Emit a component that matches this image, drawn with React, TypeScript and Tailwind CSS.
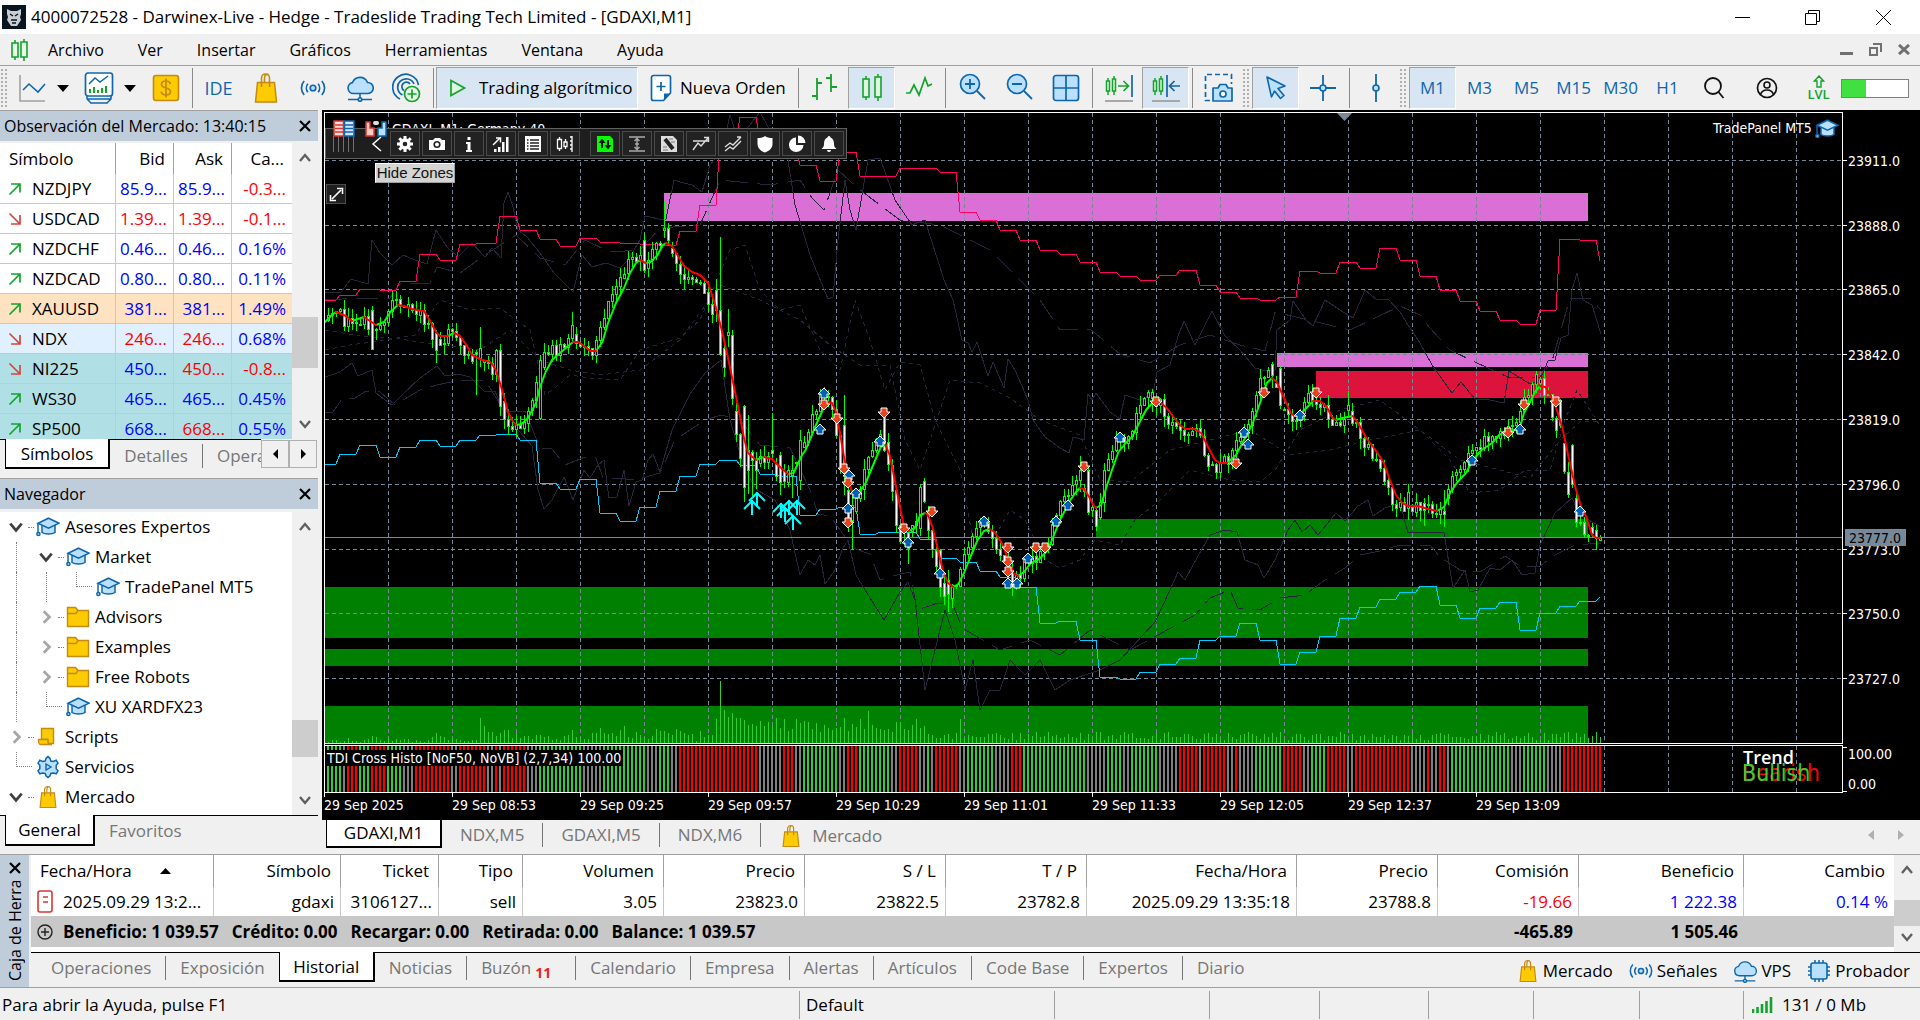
import type { ReactNode } from 'react'
import clsx from 'clsx'

/* ---------- icons ---------- */

const BLUE = '#0f66ad'
const SKY = '#b9e1ff'
const GREEN = '#12a42b'
const GOLD = '#fdcb00'
const BROWN = '#c48a12'

type IconProps = { children: ReactNode; w?: number; h?: number; className?: string }

function Icon({ children, w = 28, h = 32, className }: IconProps) {
  return (
    <svg width={w} height={h} viewBox={`0 0 ${w} ${h}`} fill="none" className={clsx('shrink-0', className)} aria-hidden="true">
      {children}
    </svg>
  )
}

function BagIcon({ small = false }: { small?: boolean }) {
  return (
    <svg width={small ? 18 : 24} height={small ? 24 : 32} viewBox="0 0 24 32" fill="none" className="shrink-0" aria-hidden="true">
      <path d="M3.500 10.500h17l2 19.500h-21z" fill={GOLD} stroke={BROWN} strokeWidth="1.500" />
      <path d="M7.500 15V6a4 4 0 0 1 8 0v9M10.500 10V6a4 4 0 0 1 4-4" stroke={BROWN} strokeWidth="1.600" />
    </svg>
  )
}

function SignalIcon({ w = 26 }: { w?: number }) {
  return (
    <svg width={w} height={w} viewBox="0 0 28 28" fill="none" stroke={BLUE} strokeWidth="1.800" className="shrink-0" aria-hidden="true">
      <circle cx="14" cy="14" r="3" fill={SKY} />
      <path d="M8.500 9.500a7 7 0 0 0 0 9M19.500 9.500a7 7 0 0 1 0 9M4.500 6.500a11 11 0 0 0 0 15M23.500 6.500a11 11 0 0 1 0 15" />
    </svg>
  )
}

function CloudIcon({ w = 28 }: { w?: number }) {
  return (
    <svg width={w} height={w} viewBox="0 0 28 28" fill="none" stroke={BLUE} strokeWidth="1.600" className="shrink-0" aria-hidden="true">
      <path d="M7.500 19.500a5.500 5.500 0 0 1-1-10.900A8 8 0 0 1 21.500 8.500a5.500 5.500 0 0 1 .5 11z" fill={SKY} />
      <path d="M14 19.500V24M2 25.500h24" />
      <circle cx="14" cy="25.500" r="1.800" fill={SKY} />
    </svg>
  )
}

function HatIcon({ className }: { className?: string }) {
  return (
    <svg width="24" height="20" viewBox="0 0 24 20" fill="none" stroke={BLUE} strokeWidth="1.500" className={clsx('shrink-0', className)} aria-hidden="true">
      <path d="M6 8v7.500c3 2 10 2 13 0V8" fill={SKY} />
      <path d="M12.500 1.200l10.500 5-10.500 5-10.500-5z" fill={SKY} />
      <path d="M2 6.500v9" />
      <circle cx="2.400" cy="17" r="1.600" fill={SKY} />
    </svg>
  )
}

function FolderIcon() {
  return (
    <Icon w={24} h={22}>
      <path d="M1.500 1.500h8l2.500 3h10.500v16h-21z" fill={GOLD} stroke={BROWN} strokeWidth="1.400" />
      <path d="M1.500 7.500h8.500l2-3" stroke={BROWN} strokeWidth="1.400" />
    </Icon>
  )
}

function ScriptIcon() {
  return (
    <Icon w={24} h={22}>
      <path d="M5.500 2.500h12v15h-5l-1.500-4h-5.500z" fill={GOLD} stroke={BROWN} strokeWidth="1.400" />
      <path d="M2.500 13.500h9.500v2.500c0 2 1.500 2.500 4 2.500H4.500c-2 0-2-2-2-5z" fill={GOLD} stroke={BROWN} strokeWidth="1.400" />
    </Icon>
  )
}

function GearPlayIcon() {
  return (
    <Icon w={24} h={24}>
      <path
        d="M12 1.500l2 2 .8 2.500 2.600.4 2.800-1.200 1.800 3-1.800 2v3.600l1.800 2-1.800 3-2.800-.8-2.600.4-.8 2.400-2 1.700-2-1.700-.8-2.400-2.600-.4-2.800.8-1.800-3 1.800-2v-3.600l-1.800-2 1.800-3 2.800 1.200 2.600-.4.800-2.500z"
        fill={SKY}
        stroke={BLUE}
        strokeWidth="1.500"
      />
      <path d="M10 9l5 3-5 3z" stroke={BLUE} strokeWidth="1.400" />
    </Icon>
  )
}

function ChipIcon() {
  return (
    <Icon w={24} h={24}>
      <path d="M8 1v22M12 1v22M16 1v22M1 8h22M1 12h22M1 16h22" stroke={BLUE} strokeWidth="1.500" />
      <rect x="4" y="4" width="16" height="16" rx="2" fill={SKY} stroke={BLUE} strokeWidth="1.600" />
    </Icon>
  )
}

function Chevron({ dir, color = '#606060', size = 14 }: { dir: 'up' | 'down' | 'right'; color?: string; size?: number }) {
  const d = { up: 'M2 10l5-6 5 6', down: 'M2 4l5 6 5-6', right: 'M5 2l5 5-5 5' }[dir]
  return (
    <svg width={size} height={size} viewBox="0 0 14 14" fill="none" className="shrink-0" aria-hidden="true">
      <path d={d} stroke={color} strokeWidth="2.400" />
    </svg>
  )
}

function CloseIcon() {
  return (
    <svg width="14" height="14" viewBox="0 0 14 14" fill="none" aria-hidden="true">
      <path d="M2 2l10 10M12 2L2 12" stroke="#000" strokeWidth="2.200" />
    </svg>
  )
}

function Candles() {
  return (
    <g stroke={GREEN} strokeWidth="1.600">
      <path d="M8 4v24M20 2v27" />
      <rect x="5" y="7" width="6" height="18" fill="#dff5df" />
      <rect x="17" y="5" width="6" height="20" fill="#dff5df" />
    </g>
  )
}

/* ---------- toolbar ---------- */

function Sep() {
  return (
    <span className="flex h-10 w-1.5 shrink-0 justify-center">
      <span className="w-px bg-[#8a8a8a]" />
    </span>
  )
}

function Grip() {
  return <span className="h-10 w-2 shrink-0 bg-[radial-gradient(#b0b0b0_1px,transparent_1px)] bg-[length:4px_4px]" />
}

function Tool({ label, active, children }: { label: string; active?: boolean; children: ReactNode }) {
  return (
    <button
      aria-label={label}
      className={clsx(
        'flex h-[42px] w-[47px] shrink-0 items-center justify-center text-[17px] text-[#0f66ad]',
        active && 'border border-[#a0a0a0] border-r-white border-b-white bg-[#d8e5f2]'
      )}
    >
      {children}
    </button>
  )
}

function Caret() {
  return (
    <svg width="12" height="7" viewBox="0 0 12 7" aria-hidden="true" className="shrink-0">
      <path d="M0 0h12l-6 7z" />
    </svg>
  )
}

function Toolbar() {
  return (
    <div className="flex h-11 items-center overflow-hidden bg-[#f0f0f0]">
      <Grip />
      <Tool label="Gráfico">
        <Icon>
          <path d="M2 3v26h25" stroke="#a0a0a0" strokeWidth="1.600" />
          <path d="M5 18l6-6 9 8 7-8" stroke={BLUE} strokeWidth="1.600" />
        </Icon>
      </Tool>
      <button aria-label="Lista de gráficos" className="flex w-4 shrink-0 justify-center">
        <Caret />
      </button>
      <span className="w-1 shrink-0" />
      <Tool label="Indicadores">
        <Icon w={30} h={34}>
          <rect x="1.500" y="2" width="27" height="23" rx="2.500" fill="#fff" stroke={BLUE} strokeWidth="1.700" />
          <path d="M5 13l6-6 5 4 8-6" stroke={BLUE} strokeWidth="1.500" />
          <path d="M6 22v-4M10 22v-6M14 22v-3M18 22v-5M22 22v-7" stroke={GREEN} strokeWidth="2" />
          <path d="M3 28h24M6 32h18M3 25v3M27 25v3l-4 4M3 28l4 4" stroke={BLUE} strokeWidth="1.500" />
        </Icon>
      </Tool>
      <button aria-label="Lista de indicadores" className="flex w-4 shrink-0 justify-center">
        <Caret />
      </button>
      <span className="w-1 shrink-0" />
      <Tool label="Depósitos">
        <Icon>
          <rect x="1.500" y="3.500" width="25" height="25" rx="2.500" fill={GOLD} stroke={BROWN} strokeWidth="1.600" />
          <path d="M18.500 12c-.5-2-2-3-4.500-3s-4.500 1-4.500 3.300c0 5 9 2.400 9 7.200 0 2.300-2 3.500-4.500 3.500s-4.500-1.200-4.800-3.300M14 6.500v19" stroke={BROWN} strokeWidth="1.700" />
        </Icon>
      </Tool>
      <Sep />
      <Tool label="IDE">
        <span className="text-[18px]">IDE</span>
      </Tool>
      <Tool label="Mercado">
        <BagIcon />
      </Tool>
      <Tool label="Señales">
        <SignalIcon />
      </Tool>
      <Tool label="VPS">
        <CloudIcon />
      </Tool>
      <Tool label="Copiar señal">
        <Icon w={30} h={32}>
          <g stroke={BLUE} strokeWidth="1.700">
            <path d="M8 27A13 13 0 1 1 26.500 13M10.500 23A8.500 8.500 0 1 1 22 12M12 18.500a4.500 4.500 0 1 1 6-6.500" />
          </g>
          <circle cx="20" cy="22" r="7.500" fill="#e6f8e6" stroke={GREEN} strokeWidth="1.700" />
          <path d="M20 17.500v9M15.500 22h9" stroke={GREEN} strokeWidth="1.700" />
        </Icon>
      </Tool>
      <Sep />
      <button className="flex h-[42px] w-[202px] shrink-0 items-center gap-3 border border-[#a0a0a0] border-r-white border-b-white bg-[#d8e5f2] pl-3 text-[17px] whitespace-nowrap">
        <Icon w={18} h={20}>
          <path d="M2 2.500l13.500 7.500L2 17.500z" fill="#dff5df" stroke={GREEN} strokeWidth="1.700" />
        </Icon>
        Trading algorítmico
      </button>
      <button className="flex h-[42px] w-[157px] shrink-0 items-center gap-2 pl-3 text-[17px] whitespace-nowrap">
        <Icon w={22} h={28}>
          <path d="M3.500 1.500h15a2 2 0 0 1 2 2V19l-7 7.500h-10a2 2 0 0 1-2-2v-21a2 2 0 0 1 2-2z" fill="#fff" stroke={BLUE} strokeWidth="1.700" />
          <path d="M20.500 19.500h-6.500v7z" fill={BLUE} />
          <path d="M11 8v9M6.500 12.500h9" stroke={BLUE} strokeWidth="1.700" />
        </Icon>
        Nueva Orden
      </button>
      <Sep />
      <Tool label="Barras">
        <Icon>
          <path d="M6 6v22M1 24h5M6 11h5M20 2v18M15 6h5M20 15h6" stroke={GREEN} strokeWidth="1.800" />
        </Icon>
      </Tool>
      <Tool label="Velas" active>
        <Icon>
          <Candles />
        </Icon>
      </Tool>
      <Tool label="Línea">
        <Icon>
          <path d="M1 21h4l4-8 5 10 6-17 3 8 4-2" stroke={GREEN} strokeWidth="1.700" />
        </Icon>
      </Tool>
      <Sep />
      <Tool label="Ampliar">
        <Icon>
          <circle cx="12" cy="12" r="9.500" fill={SKY} stroke={BLUE} strokeWidth="1.700" />
          <path d="M19 19l8 8M12 7v10M7 12h10" stroke={BLUE} strokeWidth="1.800" />
        </Icon>
      </Tool>
      <Tool label="Reducir">
        <Icon>
          <circle cx="12" cy="12" r="9.500" fill={SKY} stroke={BLUE} strokeWidth="1.700" />
          <path d="M19 19l8 8M7 12h10" stroke={BLUE} strokeWidth="1.800" />
        </Icon>
      </Tool>
      <Tool label="Mosaico">
        <Icon>
          <rect x="1.500" y="3.500" width="25" height="25" rx="2.500" fill={SKY} stroke={BLUE} strokeWidth="1.700" />
          <path d="M14 3.500v25M1.500 16h25" stroke={BLUE} strokeWidth="1.700" />
        </Icon>
      </Tool>
      <Sep />
      <Tool label="Desplazamiento automático">
        <Icon w={30}>
          <path d="M4 6v17M10 4v19" stroke={GREEN} strokeWidth="1.500" />
          <path d="M2.500 9h3v10h-3zM8.500 7h3v12h-3z" fill="#dff5df" stroke={GREEN} strokeWidth="1.500" />
          <path d="M14 14h10M19.500 9l5 5-5 5" stroke={GREEN} strokeWidth="1.700" />
          <path d="M28 3v22" stroke={BLUE} strokeWidth="1.700" />
          <path d="M1 29h28" stroke="#a8a8a8" strokeWidth="2" />
        </Icon>
      </Tool>
      <Tool label="Desplazar gráfico" active>
        <Icon w={30}>
          <path d="M4 6v17M10 4v19" stroke={GREEN} strokeWidth="1.500" />
          <path d="M2.500 9h3v10h-3zM8.500 7h3v12h-3z" fill="#dff5df" stroke={GREEN} strokeWidth="1.500" />
          <path d="M16 3v22M19 14h10M23.500 9l-5 5 5 5" stroke={BLUE} strokeWidth="1.700" />
          <path d="M1 29h28" stroke="#a8a8a8" strokeWidth="2" />
        </Icon>
      </Tool>
      <Sep />
      <Tool label="Captura de pantalla">
        <Icon w={30}>
          <path d="M6 28.500H1.500v-26h26V12" stroke={BLUE} strokeWidth="1.700" strokeDasharray="5 3" />
          <path d="M10 16h4l2-3.500h6l2 3.500h4v13H9V16z" fill={SKY} stroke={BLUE} strokeWidth="1.700" strokeLinejoin="round" />
          <circle cx="19" cy="22" r="3" fill="#fff" stroke={BLUE} strokeWidth="1.700" />
        </Icon>
      </Tool>
      <Grip />
      <span className="w-0.5 shrink-0" />
      <Tool label="Cursor" active>
        <Icon>
          <path d="M5 5l18 9-7 2.500 6 7-3.500 3-6-7.500-3 6z" fill={SKY} stroke={BLUE} strokeWidth="1.600" strokeLinejoin="round" />
        </Icon>
      </Tool>
      <Tool label="Cruz">
        <Icon>
          <path d="M14 3v26M1 16h26" stroke={BLUE} strokeWidth="1.800" />
          <circle cx="14" cy="16" r="3" fill={SKY} stroke={BLUE} strokeWidth="1.600" />
        </Icon>
      </Tool>
      <Sep />
      <Tool label="Línea vertical">
        <Icon>
          <path d="M14 2v28" stroke={BLUE} strokeWidth="1.800" />
          <circle cx="14" cy="16" r="3" fill={SKY} stroke={BLUE} strokeWidth="1.600" />
        </Icon>
      </Tool>
      <Grip />
      <span className="w-0.5 shrink-0" />
      {['M1', 'M3', 'M5', 'M15', 'M30', 'H1'].map((tf) => (
        <Tool key={tf} label={tf} active={tf === 'M1'}>
          {tf}
        </Tool>
      ))}
      <div className="ml-auto flex shrink-0 items-center pr-[11px]">
        <button aria-label="Buscar" className="mr-3.5 flex w-[30px] justify-center">
          <Icon>
            <circle cx="13" cy="14" r="8" stroke="#111" strokeWidth="1.800" />
            <path d="M18.500 20l5 6" stroke="#111" strokeWidth="1.800" />
          </Icon>
        </button>
        <Tool label="Cuenta">
          <Icon w={24} h={24}>
            <circle cx="12" cy="12" r="9.500" stroke="#111" strokeWidth="1.700" />
            <circle cx="12" cy="9" r="3" stroke="#111" strokeWidth="1.600" />
            <path d="M5.500 18.500c1-3 3-4.500 6.500-4.500s5.500 1.500 6.500 4.500" stroke="#111" strokeWidth="1.600" />
          </Icon>
        </Tool>
        <button aria-label="LVL" className="mr-1 ml-2.5 flex w-[37px] flex-col items-center text-[13px] leading-[13px] font-semibold text-[#12a42b]">
          <Icon w={12} h={13}>
            <path d="M6 1l4.500 5H8v6H4V6H1.500z" stroke={GREEN} strokeWidth="1.400" />
          </Icon>
          LVL
        </button>
        <div className="h-[19px] w-[68px] border border-[#808080] bg-white">
          <div className="h-full w-6 bg-[#41e041]" />
        </div>
      </div>
    </div>
  )
}

/* ---------- market watch ---------- */

type Quote = { symbol: string; up: boolean; bid: string; ask: string; change: string; tone: string; bg: string }

const B = 'text-[#0000ff]'
const R = 'text-[#ff0000]'

const quotes: Quote[] = [
  { symbol: 'NZDJPY', up: true, bid: '85.9...', ask: '85.9...', change: '-0.3...', tone: 'BBR', bg: 'bg-white' },
  { symbol: 'USDCAD', up: false, bid: '1.39...', ask: '1.39...', change: '-0.1...', tone: 'RRR', bg: 'bg-white' },
  { symbol: 'NZDCHF', up: true, bid: '0.46...', ask: '0.46...', change: '0.16%', tone: 'BBB', bg: 'bg-white' },
  { symbol: 'NZDCAD', up: true, bid: '0.80...', ask: '0.80...', change: '0.11%', tone: 'BBB', bg: 'bg-white' },
  { symbol: 'XAUUSD', up: true, bid: '381...', ask: '381...', change: '1.49%', tone: 'BBB', bg: 'bg-[#ffe2c2]' },
  { symbol: 'NDX', up: false, bid: '246...', ask: '246...', change: '0.68%', tone: 'RRB', bg: 'bg-[#e0f0ff]' },
  { symbol: 'NI225', up: false, bid: '450...', ask: '450...', change: '-0.8...', tone: 'BRR', bg: 'bg-[#b0e0e6]' },
  { symbol: 'WS30', up: true, bid: '465...', ask: '465...', change: '0.45%', tone: 'BBB', bg: 'bg-[#b0e0e6]' },
  { symbol: 'SP500', up: true, bid: '668...', ask: '668...', change: '0.55%', tone: 'BRB', bg: 'bg-[#b0e0e6]' },
]

function PanelTitle({ children }: { children: ReactNode }) {
  return (
    <div className="flex h-[31px] shrink-0 items-center justify-between border-t border-[#a0a0a0] bg-[#bfcddb] pr-1.5 pl-1 text-[16px]">
      <h2>{children}</h2>
      <button aria-label="Cerrar">
        <CloseIcon />
      </button>
    </div>
  )
}

function MarketWatch() {
  const cell = 'border-r border-b border-[#c8c8c8] pr-1.5 text-right'
  const head = 'border-r border-[#a0a0a0] pr-2 text-right font-normal'
  return (
    <section className="flex h-[368px] shrink-0 flex-col">
      <PanelTitle>Observación del Mercado: 13:40:15</PanelTitle>
      <div className="mt-0.5 flex h-[296px] overflow-hidden">
        <div className="flex-1 overflow-hidden bg-white">
          <table className="w-full table-fixed border-separate border-spacing-0 text-[17px]">
            <thead>
              <tr className="h-[31px]">
                <th className="w-[116px] border-r border-[#a0a0a0] pl-[9px] text-left font-normal">Símbolo</th>
                <th className={clsx(head, 'w-[58px]')}>Bid</th>
                <th className={clsx(head, 'w-[58px]')}>Ask</th>
                <th className="pr-2 text-right font-normal">Ca...</th>
              </tr>
            </thead>
            <tbody>
              {quotes.map((q) => (
                <tr key={q.symbol} className={clsx('h-[30px]', q.bg)}>
                  <td className="border-r border-b border-[#c8c8c8] p-0">
                    <div className="flex items-center pl-2">
                      <svg width="14" height="14" viewBox="0 0 14 14" fill="none" className="mr-2.5" aria-hidden="true">
                        {q.up ? (
                          <path d="M1.500 12.500L12 2M3 2h9v8.500" stroke={GREEN} strokeWidth="1.700" />
                        ) : (
                          <path d="M1.500 1.500L12 12M12 3v9H3" stroke="#d8443c" strokeWidth="1.700" />
                        )}
                      </svg>
                      {q.symbol}
                    </div>
                  </td>
                  <td className={clsx(cell, q.tone[0] === 'B' ? B : R)}>{q.bid}</td>
                  <td className={clsx(cell, q.tone[1] === 'B' ? B : R)}>{q.ask}</td>
                  <td className={clsx('border-b border-[#c8c8c8] pr-1.5 text-right', q.tone[2] === 'B' ? B : R)}>{q.change}</td>
                </tr>
              ))}
            </tbody>
          </table>
        </div>
        <div className="relative flex w-[26px] flex-col items-center justify-between py-2">
          <Chevron dir="up" />
          <span className="absolute inset-x-0 top-[174px] h-[51px] bg-[#cdcdcd]" />
          <Chevron dir="down" />
        </div>
      </div>
      <div className="flex h-[30px] text-[17px] text-[#767676]">
        <span className="w-[5px] border-t border-black" />
        <button className="w-[105px] border border-t-0 border-r-2 border-b-2 border-black bg-white pt-0.5 text-black">Símbolos</button>
        <div className="flex flex-1 overflow-hidden border-t border-black pt-1">
          <button className="mb-0.5 h-6 w-[93px] shrink-0 border-r border-[#767676] leading-5">Detalles</button>
          <button className="h-6 shrink-0 pl-3.5 leading-5">Operaciones</button>
        </div>
        <div className="flex bg-[#f0f0f0] pt-px pr-px">
          <button aria-label="Anterior" className="flex h-7 w-7 items-center justify-center border border-[#b0b0b0]">
            <svg width="5" height="10" viewBox="0 0 5 10"><path d="M5 0v10L0 5z" /></svg>
          </button>
          <button aria-label="Siguiente" className="flex h-7 w-7 items-center justify-center border border-[#b0b0b0]">
            <svg width="5" height="10" viewBox="0 0 5 10"><path d="M0 0v10l5-5z" /></svg>
          </button>
        </div>
      </div>
    </section>
  )
}

/* ---------- navigator ---------- */

type Node = { label: string; depth: number; state: 'open' | 'closed' | 'leaf'; icon: ReactNode }

const nodes: Node[] = [
  { label: 'Asesores Expertos', depth: 0, state: 'open', icon: <HatIcon /> },
  { label: 'Market', depth: 1, state: 'open', icon: <HatIcon /> },
  { label: 'TradePanel MT5', depth: 2, state: 'leaf', icon: <HatIcon /> },
  { label: 'Advisors', depth: 1, state: 'closed', icon: <FolderIcon /> },
  { label: 'Examples', depth: 1, state: 'closed', icon: <FolderIcon /> },
  { label: 'Free Robots', depth: 1, state: 'closed', icon: <FolderIcon /> },
  { label: 'XU XARDFX23', depth: 1, state: 'leaf', icon: <HatIcon /> },
  { label: 'Scripts', depth: 0, state: 'closed', icon: <ScriptIcon /> },
  { label: 'Servicios', depth: 0, state: 'leaf', icon: <GearPlayIcon /> },
  { label: 'Mercado', depth: 0, state: 'open', icon: <BagIcon small /> },
]

function Navigator() {
  return (
    <section className="flex min-h-0 flex-1 flex-col">
      <PanelTitle>Navegador</PanelTitle>
      <div className="mt-[3px] flex min-h-0 flex-1">
        <ul className="flex-1 overflow-hidden bg-white text-[17px]">
          {nodes.map((n) => (
            <li key={n.label} className="flex h-[30px] items-center whitespace-nowrap">
              {n.depth > 0 && <span className="ml-4 h-full w-[14px] border-l border-dotted border-[#808080]" />}
              {n.depth > 1 && <span className="ml-4 h-full w-[14px] border-l border-dotted border-[#808080]" />}
              {n.state === 'leaf' ? (
                <span className="flex h-full w-9 items-start pl-4">
                  <span className="h-1/2 w-4 border-b border-l border-dotted border-[#808080]" />
                </span>
              ) : (
                <span className="flex w-9 items-center pl-2">
                  <Chevron dir={n.state === 'open' ? 'down' : 'right'} color={n.state === 'open' ? '#404040' : '#a6a6a6'} size={16} />
                  <span className="ml-1 w-1.5 border-t border-dotted border-[#808080]" />
                </span>
              )}
              <span className="flex w-6 justify-center">{n.icon}</span>
              <span className="ml-[5px]">{n.label}</span>
            </li>
          ))}
        </ul>
        <div className="relative flex w-[26px] flex-col items-center justify-between py-2">
          <Chevron dir="up" />
          <span className="absolute inset-x-0 top-[208px] h-[37px] bg-[#cdcdcd]" />
          <Chevron dir="down" />
        </div>
      </div>
      <div className="mb-2 flex h-[31px] text-[17px] text-[#767676]">
        <span className="w-[5px] border-t border-black" />
        <button className="w-[90px] border border-t-0 border-r-2 border-b-2 border-black bg-white text-black">General</button>
        <button className="flex-1 border-t border-black pl-3.5 text-left">Favoritos</button>
      </div>
    </section>
  )
}

/* ---------- chart data, in chart pixels; bar n sits at x = 328 + 4n ---------- */

const BARS = 319
const barX = (n: number) => 328 + n * 4

const maPoints = [
  -1, 323, 1, 315, 2, 312, 4.5, 316, 6, 321, 9, 317, 10.5, 321, 12, 325, 14, 322, 15.6, 312, 17.4, 305, 19, 306, 21, 309, 24, 311, 25.4, 320,
  27, 332, 28, 336, 30, 336, 31.6, 333, 33, 336, 34.6, 345, 36, 355, 38.5, 360, 40.6, 362, 42, 370, 43, 383, 44, 397, 45, 412, 46, 420, 47, 425,
  48.4, 424, 50, 418, 52, 403, 53, 387, 54.4, 372, 56, 360, 58, 353, 60, 346, 61.3, 342, 62.6, 342, 64, 346, 65.6, 351, 67, 351, 68.6, 342,
  70, 323, 72, 303, 74, 288, 75.5, 273, 77, 263, 78, 260, 79.4, 263, 80.6, 262, 82.4, 255, 83.7, 245, 84.5, 243, 86, 246, 87.5, 256, 89, 266,
  91, 272, 93, 275, 95, 283, 96.6, 302, 98.3, 328, 99.6, 350, 101.3, 383, 102.6, 408, 104, 438, 105, 453, 107, 460, 109, 457, 111, 459,
  113, 467, 115, 474, 116.4, 473, 118.5, 455, 119.4, 450, 122, 425, 124, 407, 125, 402, 126, 403, 127, 412, 128, 433, 129, 457, 130, 475,
  131, 493, 132, 497, 134.4, 483, 136.5, 463, 138.2, 447, 139.4, 445, 140.4, 455, 141.7, 480, 143, 507, 144, 527, 145.3, 531, 146.7, 528,
  148.1, 515, 149.3, 513, 150, 515, 151.2, 528, 152.5, 550, 153.7, 570, 155, 583, 156.3, 587, 157.6, 584, 159, 573, 160.6, 557, 162.4, 540,
  164, 531, 165.4, 529, 166.7, 532, 168.4, 543, 170, 558, 171.4, 573, 172.5, 576, 174, 572, 175.7, 563, 177.8, 559, 180, 550, 181.3, 537,
  183, 520, 185.6, 500, 187, 492, 188, 488, 189, 489, 190.3, 497, 191.2, 504, 192, 508, 193.3, 505, 194.6, 487, 196, 470, 197.6, 452,
  199.4, 443, 201, 437, 202.8, 423, 204.5, 410, 206.3, 402, 208, 402, 209.7, 408, 211.4, 417, 213, 425, 214.4, 429, 216.6, 429, 218.3, 433,
  220, 447, 221.8, 460, 223, 463, 224.8, 463, 227, 455, 229, 440, 231.2, 423, 233, 403, 234.7, 383, 236, 378, 237.2, 382, 239, 398,
  240.7, 413, 241.6, 416, 242.8, 415, 244.6, 408, 246.3, 401, 248, 401, 249.7, 407, 251, 417, 252, 420, 253.6, 418, 256.2, 416, 257.5, 423,
  259.6, 438, 262.2, 452, 264, 463, 265.2, 477, 267, 495, 268.6, 503, 270, 506, 272.5, 506, 275, 509, 277.2, 511, 279, 507, 280.6, 492,
  282.4, 482, 284.5, 473, 286.2, 460, 288.4, 450, 291, 443, 293, 434, 295.7, 432, 298, 427, 299, 413, 300.4, 403, 301.7, 392, 303, 386,
  304.3, 387, 305.6, 395, 307, 407, 308.6, 428, 310.3, 460, 312, 490, 313.4, 508, 314.6, 517, 316, 535, 317.2, 538, 318, 538,
]

function ma(n: number) {
  for (let i = 2; i < maPoints.length; i += 2) {
    if (n <= maPoints[i]) {
      const [x0, y0, x1, y1] = maPoints.slice(i - 2, i + 2)
      return y0 + ((y1 - y0) * (n - x0)) / (x1 - x0)
    }
  }
  return maPoints[maPoints.length - 1]
}

const noise = (n: number) => {
  const v = Math.sin(n * 127.1 + 11.7) * 43758.5453
  return v - Math.floor(v)
}

// bars whose range stands out: high, open, close, low
const bigBars: Record<number, [number, number, number, number]> = {
  11: [306, 310, 349, 350],
  27: [330, 333, 350, 363],
  37: [350, 352, 354, 395],
  38: [327, 358, 348, 367],
  42: [349, 374, 350, 382],
  43: [344, 350, 406, 416],
  53: [355, 418, 360, 420],
  61: [312, 338, 325, 341],
  79: [233, 240, 270, 273],
  84: [202, 230, 228, 238],
  85: [223, 228, 240, 246],
  97: [279, 290, 310, 322],
  98: [237, 310, 354, 356],
  100: [309, 335, 332, 347],
  101: [330, 335, 398, 405],
  104: [405, 406, 487, 502],
  105: [415, 450, 470, 494],
  106: [450, 452, 460, 496],
  107: [452, 460, 470, 489],
  111: [413, 450, 453, 458],
  113: [452, 455, 482, 495],
  116: [455, 475, 470, 498],
  118: [430, 480, 440, 490],
  129: [395, 425, 470, 495],
  130: [470, 490, 520, 532],
  131: [490, 520, 505, 549],
  139: [410, 415, 450, 452],
  145: [528, 532, 548, 564],
  148: [484, 528, 487, 536],
  149: [478, 481, 501, 503],
  153: [549, 550, 587, 597],
  155: [570, 580, 594, 612],
  188: [456, 480, 470, 492],
  190: [466, 470, 512, 515],
  192: [508, 510, 526, 531],
  206: [389, 398, 392, 412],
  236: [362, 364, 375, 388],
  238: [365, 368, 405, 409],
  255: [391, 410, 405, 416],
  270: [484, 508, 492, 520],
  274: [498, 503, 510, 526],
  279: [490, 511, 514, 527],
  303: [377, 383, 379, 390],
  308: [399, 400, 425, 428],
  311: [444, 445, 484, 488],
  316: [523, 527, 533, 537],
  317: [525, 530, 538, 550],
  318: [535, 540, 538, 541],
}

const candles = Array.from({ length: BARS }, (_, n) => {
  const big = bigBars[n]
  if (big) return { n, high: big[0], open: big[1], close: big[2], low: big[3] }
  const at = (k: number) => ma(k) + (ma(k + 1.5) - ma(k - 1.5)) * 0.6 + (noise(k) - 0.5) * 14
  const open = at(n - 1)
  const close = at(n)
  return {
    n,
    open,
    close,
    high: Math.min(open, close) - noise(n + 500) * 10,
    low: Math.max(open, close) + noise(n + 900) * 11,
  }
})

// step bands: one level every five bars
const upperBand = [
  300, 295, 289, 290, 281, 254, 260, 244, 243, 216, 230, 239, 246, 238, 242, 243, 244, 245, 231, 205, 140, 117, 140, 150, 165, 181, 152, 176, 176,
  168, 168, 172, 212, 220, 230, 240, 250, 254, 262, 272, 276, 280, 275, 270, 285, 292, 298, 300, 297, 271, 273, 262, 268, 248, 260, 276, 290, 301,
  311, 320, 324, 310, 239, 240,
]
const lowerBand = [
  464, 454, 445, 457, 447, 440, 446, 440, 435, 434, 440, 483, 489, 479, 513, 521, 507, 491, 476, 464, 460, 465, 474, 476, 515, 509, 507, 534, 532,
  532, 539, 558, 562, 571, 577, 587, 623, 621, 640, 677, 679, 672, 664, 658, 640, 636, 623, 640, 664, 652, 636, 618, 607, 599, 592, 586, 605, 618,
  608, 602, 630, 613, 606, 601,
]

const stepPath = (levels: number[], last: number) =>
  levels.map((y, k) => `${Math.max(325, barX(5 * k - 2))},${y} ${barX(5 * k + 2)},${y}`).join(' ') + ` ${barX(318)},${last}`

const ghostLines = [
  '325,293 341,292 351,279 368,284 372,240 380,253 392,265 403,255 415,260 427,264 436,230 447,247 458,257 472,243 485,257 492,248 501,258 504,203 508,192 513,207 518,230 527,237 540,253 554,273 573,292 582,255 592,267 606,263 620,268 628,260 640,240 645,216 664,220 666,219 674,180 680,182 692,185 702,192 710,165 722,150 730,115 738,140 760,112 775,140 788,160 795,205 810,255 828,299 833,297 838,240 845,180 850,210 856,230 868,160 880,158 895,200 912,225 925,220 944,280 953,300 962,340 968,343 972,352 977,342 988,376 993,362 1004,388 1008,359 1015,370 1028,400 1033,420 1045,437 1060,448 1069,453 1073,437 1084,440 1088,394 1092,400 1096,393 1110,412 1120,419 1125,395 1140,400 1153,394 1157,372 1170,365 1178,336 1184,321 1195,345 1212,311 1225,336 1240,350 1255,368 1266,371 1275,370 1277,330 1290,320 1293,301 1306,320 1313,326 1325,300 1340,310 1353,318 1365,290 1377,300 1388,299 1400,312 1408,325 1420,343 1432,365 1452,393 1461,382 1475,399 1490,400 1504,403 1509,371 1530,384 1540,380 1548,361 1555,360 1561,338 1568,335 1572,290 1577,273 1583,300 1592,305 1601,334',
  '325,377 340,372 352,363 358,376 372,370 376,393 392,405 402,395 420,378 437,366 445,376 458,374 470,377 485,392 495,391 505,415 520,432 532,446 538,490 544,509 552,500 564,477 573,500 584,470 590,478 598,465 604,460 609,498 617,497 624,470 629,506 636,482 642,480 648,460 653,454 660,472 672,430 690,394 705,373 721,360 730,420 745,470 757,490 775,500 790,530 800,575 808,560 815,565 820,555 825,584 835,570 842,550 848,540 856,575 865,590 884,620 900,592 908,582 915,600 925,690 940,630 945,610 955,640 965,690 973,660 980,710 990,690 1000,690 1010,660 1025,675 1040,660 1055,690 1070,680 1100,670 1120,660 1155,622 1170,590 1178,572 1185,580 1193,565 1210,535 1225,530 1237,532 1245,560 1258,565 1264,578 1275,560 1288,530 1295,520 1302,532 1310,525 1318,535 1336,513 1345,521 1358,506 1368,500 1373,516 1385,508 1400,503 1408,533 1430,532 1444,533 1453,588 1465,570 1470,592 1478,590 1490,568 1500,570 1512,560 1522,575 1535,573 1540,545 1555,513 1572,498 1580,515 1601,527',
]

const ghostDashes = [
  '325,413 333,412 342,399 355,398 366,391 380,392 395,405 420,390 437,385 460,380 485,380 505,412 525,411 540,448 552,449 565,465 585,457 596,458 603,478 617,478 635,480 660,473 675,440 690,430 705,420 721,415 740,420 760,445 790,448 810,490 818,514 830,516 853,548 870,554 880,580 900,574 910,572 917,610 935,604 952,602 962,628 1000,650 1030,640 1060,655 1090,630 1130,650 1195,615 1210,598 1230,590 1238,608 1260,610 1280,598 1305,595 1325,580 1345,568 1360,555 1380,551 1400,545 1430,545 1440,557 1460,570 1480,572 1505,556 1520,566 1540,566 1555,555 1575,545 1601,543',
  '325,300 360,298 390,298 400,283 430,283 437,267 460,273 485,255 516,235 540,258 565,265 585,240 610,252 640,250 660,228 700,225 720,180 770,185 800,180 812,198 824,210 838,170 860,190 900,220 940,225 990,250 1040,300 1060,330 1090,329 1120,354 1150,363 1180,345 1210,335 1240,345 1265,351 1275,312 1300,318 1350,330 1400,306 1420,315 1430,328 1450,350 1475,362 1510,378 1540,377 1552,361 1570,298 1590,298 1601,310',
]

const ghostDots = [
  '325,350 350,345 380,341 415,335 440,300 470,310 500,308 530,330 545,395 555,388 570,375 590,378 620,380 640,350 680,338 700,320 730,250 745,245 760,290 780,310 800,305 820,350 840,370 855,300 870,340 885,390 900,362 920,365 935,420 960,470 975,550 990,545 1010,510 1025,520 1045,560 1060,568 1080,560 1095,540 1120,545 1135,520 1160,500 1190,470 1230,480 1260,482 1275,470 1300,430 1340,410 1380,400 1420,430 1450,460 1470,493 1500,490 1525,470 1550,470 1565,420 1577,390 1601,427',
  '325,330 360,336 400,339 440,345 480,350 510,330 540,360 570,370 600,375 640,370 680,340 720,285 760,300 800,320 830,345 860,365 890,365 905,440 920,470 950,380 980,383 1010,398 1040,420 1080,435 1100,480 1130,482 1170,450 1210,440 1250,430 1290,455 1330,450 1370,440 1420,430 1460,460 1500,470 1530,478 1560,440 1580,422 1601,421',
]

const blueMarks = [
  824, 393, 820, 429, 849, 475, 856, 493, 848, 508, 880, 441, 908, 542, 940, 573, 984, 521, 1008, 583, 1017, 583, 1028, 558, 1056, 521, 1068, 505,
  1120, 437, 1244, 432, 1248, 444, 1300, 415, 1472, 460, 1520, 429, 1580, 511,
]
const redMarks = [
  824, 405, 837, 419, 844, 469, 848, 483, 848, 523, 884, 413, 904, 529, 932, 512, 1008, 548, 1008, 562, 1008, 572, 1036, 548, 1045, 548, 1084, 467,
  1156, 402, 1236, 464, 1264, 393, 1316, 393, 1508, 433, 1524, 405, 1556, 402,
]
const cyanArrows = [757, 492, 752, 500, 781, 503, 785, 507, 789, 500, 793, 515, 797, 500]

const pairs = (list: number[]) => list.flatMap((x, i) => (i % 2 ? [] : [[x, list[i + 1]]]))

const volumeHead = [
  1, 3, 3, 1, 2, 5, 2, 2, 1, 3, 4, 7, 6, 3, 2, 5, 2, 4, 3, 4, 4, 1, 3, 2, 1, 3, 6, 10, 7, 6, 3, 5, 4, 3, 2, 2, 3, 3, 25, 17, 11, 11, 7, 10, 13, 13, 5,
  10, 5, 7, 7, 4, 8, 8, 6, 7, 3, 4, 3, 7, 8, 13, 6, 6, 4, 4, 10, 10, 15, 10, 9, 10, 7, 13, 17, 6, 5, 11, 8, 6, 4, 7, 14, 12, 12, 10, 8, 14, 12, 10,
  8, 9, 2, 12, 6, 8, 8, 24, 62, 33, 26, 30, 25, 25, 23, 18, 19, 17, 22, 17, 21,
]
const volume = (n: number) => {
  if (n < volumeHead.length) return volumeHead[n]
  if (n === 135) return 32
  if (n === 158) return 24
  if (n < 150) return 11 + Math.round(noise(n) * 14)
  return 3 + Math.round(noise(n) * 8)
}

const histoRuns =
  'g4 n1 r3 g3 r4 g4 n3 r9 n2 r7 n2 r1 n1 r6 n3 g11 n5 g11 n3 g3 n2 r20 n6 r3 n2 g9 n2 r3 g8 n2 r5 n2 g1 n1 r6 n2 g7 n4 r3 g16 n5 g4 n2 g7 n5 r5 n1 r6 n2 r1 n4 g7 r5 n2 g4 r5 n2 r14 n4 r1 n2 r2 n1 g15 n3 g6 n4 r10'
const histo = histoRuns.split(' ').flatMap((run) => Array<string>(Number(run.slice(1))).fill(run[0]))
const histoColor: Record<string, string> = { g: '#32cd32', n: '#808080', r: '#ff0000' }

const priceLabels = ['23911.0', '23888.0', '23865.0', '23842.0', '23819.0', '23796.0', '23773.0', '23750.0', '23727.0']
const priceY = [160, 225, 289, 354, 419, 484, 549, 613, 678]
const timeLabels = ['29 Sep 2025', '29 Sep 08:53', '29 Sep 09:25', '29 Sep 09:57', '29 Sep 10:29', '29 Sep 11:01', '29 Sep 11:33', '29 Sep 12:05', '29 Sep 12:37', '29 Sep 13:09']

function maSegments() {
  const up: string[] = []
  const down: string[] = []
  for (let i = 2; i < maPoints.length; i += 2) {
    const [x0, y0, x1, y1] = maPoints.slice(i - 2, i + 2)
    const seg = `M${barX(x0)} ${y0}L${barX(x1)} ${y1}`
    ;(y1 < y0 ? up : down).push(seg)
  }
  return { up: up.join(''), down: down.join('') }
}

function PriceChart() {
  const segs = maSegments()
  return (
    <svg
      viewBox="322 110 1598 710"
      preserveAspectRatio="xMinYMin meet"
      className="h-full w-full bg-black font-['DejaVu_Sans_Condensed','DejaVu_Sans',sans-serif] text-[14px]"
      role="img"
      aria-label="GDAXI, M1"
    >
      <defs>
        <clipPath id="pane">
          <rect x="325" y="113" width="1517" height="630" />
        </clipPath>
      </defs>

      <g clipPath="url(#pane)">
        <g shapeRendering="crispEdges">
          <rect x="664" y="193" width="924" height="28" fill="#da70d6" />
          <rect x="1277" y="353" width="311" height="14" fill="#da70d6" />
          <rect x="1316" y="371" width="272" height="27" fill="#dc143c" />
          <rect x="1096" y="519" width="492" height="18" fill="#008000" />
          <rect x="325" y="587" width="1263" height="51" fill="#008000" />
          <rect x="325" y="649" width="1263" height="17" fill="#008000" />
          <rect x="325" y="706" width="1263" height="37" fill="#008000" />
        </g>

        <g stroke="#778899" strokeDasharray="4 3" shapeRendering="crispEdges">
          {priceY.map((y) => (
            <path key={y} d={`M325 ${y + 0.5}H1842`} />
          ))}
          {Array.from({ length: 23 }, (_, i) => (
            <path key={i} d={`M${388.5 + i * 64} 113V743`} />
          ))}
        </g>

        <g fill="none" stroke="#26263a" shapeRendering="crispEdges">
          {ghostLines.map((p, i) => (
            <polyline key={i} points={p} />
          ))}
          {ghostDashes.map((p, i) => (
            <polyline key={i} points={p} strokeDasharray="22 9" />
          ))}
          {ghostDots.map((p, i) => (
            <polyline key={i} points={p} strokeDasharray="4 4" />
          ))}
        </g>

        <g stroke="#32cd32" shapeRendering="crispEdges">
          {candles.map(({ n }) => (
            <path key={n} d={`M${barX(n) + 0.5} 743v${-volume(n)}`} />
          ))}
        </g>

        <path d="M325 537.500H1842" stroke="#778899" shapeRendering="crispEdges" />
        <g fill="none" shapeRendering="crispEdges">
          <polyline points={stepPath(upperBand, 261)} stroke="#ff0066" />
          <polyline points={stepPath(lowerBand, 597)} stroke="#00ccff" />
        </g>

        <g stroke="#00ff00" shapeRendering="crispEdges">
          {candles.map((c) => {
            const top = Math.round(Math.min(c.open, c.close))
            const h = Math.max(1, Math.round(Math.abs(c.close - c.open)))
            return (
              <g key={c.n}>
                <path d={`M${barX(c.n) + 0.5} ${Math.round(c.high)}V${Math.round(c.low)}`} />
                <rect x={barX(c.n) - 0.5} y={top + 0.5} width="2" height={h} fill={c.close > c.open ? '#fff' : '#000'} />
                {c.close > c.open && h > 2 && <path d={`M${barX(c.n) + 0.5} ${top + 1}v${h - 1}`} stroke="#fff" />}
              </g>
            )
          })}
        </g>
        <path d={segs.up} stroke="#00ff00" strokeWidth="2" strokeLinecap="round" fill="none" />
        <path d={segs.down} stroke="#ff0000" strokeWidth="2" strokeLinecap="round" fill="none" />

        <g stroke="#00ffff" strokeWidth="2" fill="none">
          {pairs(cyanArrows).map(([x, y]) => (
            <path key={`${x}-${y}`} d={`M${x} ${y}v15M${x - 8} ${y + 9}l8-8 8 8`} />
          ))}
        </g>
        <g stroke="#fff" strokeWidth="1" fill="#0060b4">
          {pairs(blueMarks).map(([x, y]) => (
            <path key={`${x}-${y}`} d={`M${x} ${y - 5}l6 6h-3v4h-6v-4h-3z`} />
          ))}
        </g>
        <g stroke="#fff" strokeWidth="1" fill="#e8431f">
          {pairs(redMarks).map(([x, y]) => (
            <path key={`${x}-${y}`} d={`M${x} ${y + 5}l6-6h-3v-4h-6v4h-3z`} />
          ))}
        </g>
      </g>

      <g shapeRendering="crispEdges">
        {histo.map((c, i) => (
          <rect key={i} x={327 + i * 4} y="746" width="2" height="46" fill={histoColor[c]} />
        ))}
        <g stroke="#778899" strokeDasharray="4 3">
          {[0, 1, 2, 3].map((i) => (
            <path key={i} d={`M${1604.5 + i * 64} 746V792`} />
          ))}
        </g>
        <path d="M324.500 797V112.500H1842.500V743M324 743.500H1842.500M324 745.500H1842.500V792.500H324" stroke="#fff" fill="none" />
        {priceY.map((y) => (
          <path key={y} d={`M1842 ${y + 0.5}h5`} stroke="#fff" />
        ))}
        {timeLabels.map((t, i) => (
          <path key={t} d={`M${324.5 + i * 128} 792v5`} stroke="#fff" />
        ))}
        <path d="M1842 747.500h5M1842 791.500h5" stroke="#fff" />
        <rect x="325" y="750" width="298" height="16" fill="#000" />
      </g>
      <path d="M1337 113h15l-7.500 8z" fill="#778899" />

      <g fill="#fff">
        {priceLabels.map((p, i) => (
          <text key={p} x="1848" y={priceY[i] + 6}>
            {p}
          </text>
        ))}
        {timeLabels.map((t, i) => (
          <text key={t} x={324 + i * 128} y="810">
            {t}
          </text>
        ))}
        <text x="1848" y="759">100.00</text>
        <text x="1848" y="789">0.00</text>
        <text x="327" y="763">TDI Cross Histo [NoF50, NoVB] (2,7,34) 100.00</text>
        <text x="392" y="134">GDAXI, M1:  Germany 40</text>
        <text x="1713" y="133">TradePanel MT5</text>
        <text x="1743" y="764" className="font-['Open_Sans'] text-[18px] font-semibold">Trend</text>
      </g>
      <g className="font-['DejaVu_Sans_Condensed','DejaVu_Sans',sans-serif] text-[23px]">
        <text x="1742" y="781" fill="#ff0000">Bearish</text>
        <text x="1742" y="781" fill="#32cd32">Bullish</text>
      </g>
      <rect x="1845" y="529" width="61" height="17" fill="#778899" />
      <text x="1849" y="543">23777.0</text>
      <g transform="translate(1815 119)">
        <path d="M6 8v7.500c3 2 10 2 13 0V8" fill={SKY} stroke={BLUE} strokeWidth="1.500" />
        <path d="M12.500 1.200l10.500 5-10.500 5-10.500-5z" fill={SKY} stroke={BLUE} strokeWidth="1.500" />
        <path d="M2 6.500v9" stroke={BLUE} strokeWidth="1.500" />
        <circle cx="2.400" cy="17" r="1.600" fill={SKY} stroke={BLUE} strokeWidth="1.500" />
      </g>
    </svg>
  )
}

const panelTools: { label: string; icon: ReactNode }[] = [
  {
    label: 'Settings',
    icon: (
      <>
        <circle cx="9" cy="9" r="4" stroke="#fff" strokeWidth="3.500" />
        <path d="M9 1v3M9 14v3M1 9h3M14 9h3M3.300 3.300l2 2M12.700 12.700l2 2M3.300 14.700l2-2M12.700 5.300l2-2" stroke="#fff" strokeWidth="3" />
      </>
    ),
  },
  {
    label: 'Screenshot',
    icon: (
      <>
        <path d="M1 5h4l2-2h5l2 2h3v10H1z" fill="#fff" />
        <circle cx="9" cy="9.500" r="3.600" fill="#222" />
        <circle cx="9" cy="9.500" r="2" fill="#fff" />
      </>
    ),
  },
  { label: 'Info', icon: <path d="M7.500 2h3v3h-3zM6 7h4.500v8H12v2H6v-2h1.500V9H6z" fill="#fff" /> },
  {
    label: 'Statistics',
    icon: (
      <>
        <path d="M2 17v-3h2.500v3zM6 17v-5h2.500v5zM10 17V7h2.500v10zM14 17V2h2.500v15z" fill="#fff" />
        <path d="M1 10l7-7M4 3h4.500v4.500" stroke="#fff" strokeWidth="1.500" />
      </>
    ),
  },
  {
    label: 'List',
    icon: (
      <>
        <path d="M1 1h16v16H1z" fill="#fff" />
        <path d="M6 5h9M6 8h9M6 11h9M6 14h9M3 5h1.500M3 8h1.500M3 11h1.500M3 14h1.500" stroke="#222" strokeWidth="1.300" />
      </>
    ),
  },
  {
    label: 'Candles',
    icon: (
      <>
        <path d="M3.500 2v14M9.500 4v10M16 1v16M14 2h2M14 6h2M14 10h2M14 14h2" stroke="#fff" strokeWidth="1.300" />
        <path d="M1.500 4.500h4v9h-4zM8 7h3v4.500H8z" fill="#222" stroke="#fff" strokeWidth="1.300" />
      </>
    ),
  },
  {
    label: 'Trade',
    icon: (
      <>
        <path d="M1 1h13l3 3v13H1z" fill="#0f0" />
        <path d="M6 13V7M12 5v6" stroke="#111" strokeWidth="2" />
        <path d="M2.500 8L6 3.500 9.500 8zM8.500 10l3.500 4.500 3.500-4.500z" fill="#111" />
      </>
    ),
  },
  {
    label: 'Range',
    icon: <path d="M1 2h16M1 16h16M9 3v12M6.500 6L9 3.500 11.500 6M6.500 12L9 14.500 11.500 12M7 9h4" stroke="#aaa" strokeWidth="1.400" />,
  },
  {
    label: 'Notes',
    icon: (
      <>
        <path d="M1 1h12l4 4v12H1z" fill="#ddd" />
        <path d="M5 4l8 10" stroke="#222" strokeWidth="4" />
        <path d="M9 4h4M11 7h4M3 12h4M3 15h5" stroke="#777" />
      </>
    ),
  },
  { label: 'Trend', icon: <path d="M1 15l5-7 3 3 7-8M1 6h16M12 2.500h4.500V7" stroke="#ddd" strokeWidth="1.400" /> },
  { label: 'Channel', icon: <path d="M1 12l5-4 3 2 8-8M1 16l5-4 3 2 8-8M13 2h4" stroke="#ddd" strokeWidth="1.400" /> },
  { label: 'Protection', icon: <path d="M9 1c2 1.500 4 2 7.500 2v6c0 4-3 7-7.500 8.500C4.500 16 1.500 13 1.500 9V3C5 3 7 2.500 9 1z" fill="#fff" /> },
  { label: 'Statistics by symbol', icon: <path d="M8 2.500A7.300 7.300 0 1 0 15.500 10H8zM10 .5V8h7.500A7.500 7.500 0 0 0 10 .5z" fill="#fff" /> },
  { label: 'Alerts', icon: <path d="M9 1a1.500 1.500 0 0 1 1.500 1.500C13 3.500 14 5.500 14 9c0 2.500 1 3.500 2.500 5h-15C3 12.500 4 11.500 4 9c0-3.500 1-5.500 3.500-6.500A1.500 1.500 0 0 1 9 1zM7 15h4a2 2 0 0 1-4 0z" fill="#fff" /> },
]

function ChartArea() {
  return (
    <div className="relative min-h-0 flex-1 bg-black">
      <PriceChart />
      <div className="absolute top-[18px] left-[3px] flex h-[31px] items-center border border-[#606060] bg-[#1e1e1e]">
        <span className="ml-[7px] h-4 w-[21px] bg-[repeating-linear-gradient(90deg,#707070_0px,#707070_1px,transparent_1px,transparent_5px)]" />
        <button aria-label="Collapse" className="flex h-7 w-9 items-center justify-end pr-2">
          <svg width="11" height="16" viewBox="0 0 11 16" fill="none"><path d="M10 1L2 8l8 7" stroke="#fff" strokeWidth="1.500" /></svg>
        </button>
        {panelTools.map((t, i) => (
          <button
            key={t.label}
            aria-label={t.label}
            className={clsx('mr-0.5 flex h-[25px] w-[30px] items-center justify-center border border-[#4a4a4a] bg-[#222]', i === 6 && 'ml-2')}
          >
            <svg width="18" height="18" viewBox="0 0 18 18" fill="none" aria-hidden="true">
              {t.icon}
            </svg>
          </button>
        ))}
      </div>
      <div className="absolute top-[10px] left-[11px] flex gap-2.5">
        <svg width="22" height="17" viewBox="0 0 22 17" fill="none" aria-hidden="true">
          <path d="M1 1h9.500v15H1z" fill="#ffdcd8" stroke="#d8372f" strokeWidth="1.500" />
          <path d="M11.500 1H21v15h-9.500z" fill="#cfe8ff" stroke={BLUE} strokeWidth="1.500" />
          <path d="M2 5h8M2 8.500h8M2 12h8" stroke="#d8372f" strokeWidth="1.500" />
          <path d="M12 5h8M12 8.500h8M12 12h8" stroke={BLUE} strokeWidth="1.500" />
        </svg>
        <svg width="22" height="17" viewBox="0 0 22 17" fill="none" aria-hidden="true">
          <path d="M1 2h4v6h4v8H1z" fill="#ffc9c4" stroke="#d8372f" strokeWidth="1.500" />
          <path d="M21 2h-4v6h-4v8h8z" fill={SKY} stroke={BLUE} strokeWidth="1.500" />
          <rect x="8" y="1" width="6" height="4" rx="2" fill="#ddd" />
        </svg>
      </div>
      <button className="absolute top-[53px] left-[53px] h-5 w-20 border border-t-white border-r-[#a0a0a0] border-b-[#a0a0a0] border-l-white bg-[#d4d4d4] font-['Liberation_Sans',sans-serif] text-[15px] leading-4 whitespace-nowrap text-[#111]">
        Hide Zones
      </button>
      <button aria-label="Expand" className="absolute top-[74px] left-1 flex h-5 w-5 items-center justify-center border border-[#4a4a4a] bg-[#1e1e1e]">
        <svg width="15" height="15" viewBox="0 0 15 15" fill="none">
          <path d="M3 12l9-9M8 1.500h5.500V7M1.500 8v5.500H7" stroke="#fff" strokeWidth="1.600" />
        </svg>
      </button>
    </div>
  )
}

/* ---------- toolbox ---------- */

const columns = [
  { w: 'w-[183px]', head: 'Fecha/Hora', value: '2025.09.29 13:2...', tone: '' },
  { w: 'w-[127px]', head: 'Símbolo', value: 'gdaxi', tone: '' },
  { w: 'w-[98px]', head: 'Ticket', value: '3106127...', tone: '' },
  { w: 'w-[84px]', head: 'Tipo', value: 'sell', tone: '' },
  { w: 'w-[141px]', head: 'Volumen', value: '3.05', tone: '' },
  { w: 'w-[141px]', head: 'Precio', value: '23823.0', tone: '' },
  { w: 'w-[141px]', head: 'S / L', value: '23822.5', tone: '' },
  { w: 'w-[141px]', head: 'T / P', value: '23782.8', tone: '' },
  { w: 'w-[210px]', head: 'Fecha/Hora', value: '2025.09.29 13:35:18', tone: '' },
  { w: 'w-[141px]', head: 'Precio', value: '23788.8', tone: '' },
  { w: 'w-[141px]', head: 'Comisión', value: '-19.66', tone: R },
  { w: 'w-[165px]', head: 'Beneficio', value: '1 222.38', tone: B },
  { w: '', head: 'Cambio', value: '0.14 %', tone: B },
]

const toolboxTabs = ['Operaciones', 'Exposición', 'Historial', 'Noticias', 'Buzón', 'Calendario', 'Empresa', 'Alertas', 'Artículos', 'Code Base', 'Expertos', 'Diario']

function Toolbox() {
  return (
    <section className="flex h-[134px] shrink-0 border-y border-[#a0a0a0]">
      <div className="flex w-[29px] shrink-0 flex-col items-center bg-[#bfcddb] pt-1.5">
        <button aria-label="Cerrar">
          <CloseIcon />
        </button>
        <h2 className="mt-1.5 h-[100px] rotate-180 overflow-hidden text-[16px] leading-5 whitespace-nowrap [writing-mode:vertical-rl]">Caja de Herramientas</h2>
      </div>
      <div className="ml-0.5 flex min-w-0 flex-1 flex-col">
        <div className="flex h-[97px] bg-white">
          <table className="h-[92px] flex-1 table-fixed border-separate border-spacing-0 text-[17px] whitespace-nowrap">
            <thead>
              <tr className="h-8">
                {columns.map((c, i) => (
                  <th
                    key={i}
                    className={clsx('p-0 font-normal', c.w, i < 12 && 'border-r border-[#a0a0a0]', i === 0 ? 'pl-[9px] text-left' : 'pr-[9px] text-right')}
                  >
                    {i === 0 ? (
                      <span className="flex items-center gap-7">
                        {c.head}
                        <svg width="11" height="6" viewBox="0 0 11 6"><path d="M0 6h11L5.500 0z" /></svg>
                      </span>
                    ) : (
                      c.head
                    )}
                  </th>
                ))}
              </tr>
            </thead>
            <tbody>
              <tr className="h-[29px]">
                {columns.map((c, i) => (
                  <td key={i} className={clsx('p-0', c.tone, i < 12 && 'border-r border-[#c8c8c8]', i === 0 ? 'pl-1.5' : 'pr-1.5 text-right')}>
                    {i === 0 ? (
                      <span className="flex items-center gap-2.5">
                        <Icon w={16} h={23}>
                          <rect x="1" y="1" width="14" height="21" rx="2" fill="#fff" stroke="#d8372f" strokeWidth="1.600" />
                          <path d="M6 7h5M6 12h5" stroke="#d8372f" strokeWidth="1.600" />
                        </Icon>
                        {c.value}
                      </span>
                    ) : (
                      c.value
                    )}
                  </td>
                ))}
              </tr>
              <tr className="h-[31px] bg-[#c8c8c8] font-bold">
                <td colSpan={10} className="p-0 pl-1.5">
                  <span className="flex items-center gap-2.5">
                    <Icon w={16} h={16}>
                      <circle cx="8" cy="8" r="7" stroke="#222" strokeWidth="1.400" />
                      <path d="M8 4v8M4 8h8" stroke="#222" strokeWidth="1.400" />
                    </Icon>
                    <span className="flex gap-[13px]">
                      <span>Beneficio: 1 039.57</span>
                      <span>Crédito: 0.00</span>
                      <span>Recargar: 0.00</span>
                      <span>Retirada: 0.00</span>
                      <span>Balance: 1 039.57</span>
                    </span>
                  </span>
                </td>
                <td className="p-0 pr-1.5 text-right">-465.89</td>
                <td className="p-0 pr-1.5 text-right">1 505.46</td>
                <td />
              </tr>
            </tbody>
          </table>
          <div className="relative flex w-[26px] flex-col items-center justify-between bg-[#f0f0f0] py-2">
            <Chevron dir="up" />
            <span className="absolute inset-x-0 top-[45px] h-[26px] bg-[#cdcdcd]" />
            <Chevron dir="down" />
          </div>
        </div>
        <div className="flex flex-1 text-[17px] whitespace-nowrap text-[#767676]">
          {toolboxTabs.map((t, i) =>
            t === 'Historial' ? (
              <button key={t} className="h-[30px] w-24 border border-t-0 border-r-2 border-b-2 border-black bg-white pt-0.5 text-center text-black">
                {t}
              </button>
            ) : (
              <div key={t} className="border-t border-black">
                <button
                  className={clsx(
                    'mt-[3px] h-6 px-[14px] leading-6',
                    i === 0 && 'pl-5',
                    i !== 1 && i !== 11 && 'border-r border-[#767676]'
                  )}
                >
                  {t}
                  {t === 'Buzón' && <sub className="mr-2.5 ml-1 text-[14px] font-bold text-[#ee1c25]">11</sub>}
                </button>
              </div>
            )
          )}
          <div className="flex flex-1 items-center justify-end gap-4 border-t border-black pt-0.5 pr-2.5 text-black">
            <a className="flex items-center gap-1.5"><BagIcon small />Mercado</a>
            <a className="flex items-center gap-1"><SignalIcon w={24} />Señales</a>
            <a className="flex items-center gap-1"><CloudIcon w={24} />VPS</a>
            <a className="flex items-center gap-1"><ChipIcon />Probador</a>
          </div>
        </div>
      </div>
    </section>
  )
}

/* ---------- page ---------- */

const menu = ['Archivo', 'Ver', 'Insertar', 'Gráficos', 'Herramientas', 'Ventana', 'Ayuda']

export default function App() {
  return (
    <div className="flex h-screen flex-col overflow-hidden bg-[#f0f0f0] font-['Open_Sans',sans-serif] text-black">
      <header className="flex h-[34px] shrink-0 items-center bg-white">
        <svg width="24" height="24" viewBox="0 0 24 24" className="ml-0.5" aria-hidden="true">
          <path d="M0 0h24v24H0z" fill="#0a1420" />
          <path d="M5 4l4 2h6l4-2v5l-1 3 1 3-4 6H9l-4-6 1-3-1-3z" fill="#c9ced3" />
          <path d="M8 9l3 2M16 9l-3 2M9 15h6M10 18h4" stroke="#0a1420" strokeWidth="1.500" />
        </svg>
        <h1 className="ml-[5px] text-[17px]">4000072528 - Darwinex-Live - Hedge - Tradeslide Trading Tech Limited - [GDAXI,M1]</h1>
        <div className="ml-auto flex h-full">
          <button aria-label="Minimizar" className="flex w-[70px] items-center justify-center">
            <span className="h-px w-[15px] bg-black" />
          </button>
          <button aria-label="Restaurar" className="flex w-[70px] items-center justify-center">
            <svg width="15" height="15" viewBox="0 0 15 15" fill="none" stroke="#000"><path d="M.5 3.500h11v11H.5zM3.500 3.500v-3h11v11h-3" /></svg>
          </button>
          <button aria-label="Cerrar" className="flex w-[73px] items-center justify-center">
            <svg width="15" height="15" viewBox="0 0 15 15" stroke="#000"><path d="M0 0l15 15M15 0L0 15" /></svg>
          </button>
        </div>
      </header>

      <nav className="flex h-8 shrink-0 items-center border-b border-[#a0a0a0] text-[16px]">
        <svg width="20" height="22" viewBox="0 0 20 22" fill="none" stroke={GREEN} strokeWidth="1.600" className="ml-2.5" aria-hidden="true">
          <path d="M5 1v20M14 0v22" />
          <path d="M2 4h6v14H2zM11 3h6v15h-6z" fill="#eaf8ea" />
        </svg>
        <div className="ml-[18px] flex gap-[34px]">
          {menu.map((m) => (
            <button key={m}>{m}</button>
          ))}
        </div>
        <div className="ml-auto flex items-center gap-4 pr-2.5">
          <button aria-label="Minimizar gráfico" className="pt-2">
            <span className="block h-[3px] w-[13px] bg-[#707070]" />
          </button>
          <button aria-label="Restaurar gráfico">
            <svg width="13" height="13" viewBox="0 0 13 13" fill="none" stroke="#707070" strokeWidth="2"><path d="M1 5h7v7H1zM4 1h8v8" /></svg>
          </button>
          <button aria-label="Cerrar gráfico">
            <svg width="12" height="11" viewBox="0 0 12 11" stroke="#707070" strokeWidth="3"><path d="M1 1l10 9M11 1L1 10" /></svg>
          </button>
        </div>
      </nav>
      <Toolbar />

      <main className="flex min-h-0 flex-1">
        <aside className="flex w-[318px] shrink-0 flex-col">
          <MarketWatch />
          <Navigator />
        </aside>
        <section className="ml-1 flex min-w-0 flex-1 flex-col">
          <ChartArea />
          <div className="flex h-[34px] shrink-0 items-start text-[17px] text-[#767676]">
            <button className="ml-1 h-7 w-[116px] border border-t-0 border-r-2 border-b-2 border-black bg-white text-black">GDAXI,M1</button>
            {['NDX,M5', 'GDAXI,M5', 'NDX,M6'].map((t) => (
              <button key={t} className="mt-[3px] h-6 border-r border-[#767676] px-[18px] leading-6">
                {t}
              </button>
            ))}
            <button className="mt-[3px] ml-[21px] flex items-center gap-3">
              <BagIcon small />
              Mercado
            </button>
            <div className="mt-2.5 mr-4 ml-auto flex gap-6">
              <svg width="6" height="10" viewBox="0 0 6 10" fill="#b0b0b0"><path d="M6 0v10L0 5z" /></svg>
              <svg width="6" height="10" viewBox="0 0 6 10" fill="#b0b0b0"><path d="M0 0v10l6-5z" /></svg>
            </div>
          </div>
        </section>
      </main>

      <Toolbox />

      <footer className="flex h-8 shrink-0 items-stretch pt-[3px] pb-px text-[17px] leading-7">
        <span className="flex-1 border-r border-[#a0a0a0] pl-0.5">Para abrir la Ayuda, pulse F1</span>
        <span className="w-[255px] border-r border-[#a0a0a0] pl-1.5">Default</span>
        <span className="w-[155px] border-r border-[#a0a0a0]" />
        <span className="w-[110px] border-r border-[#a0a0a0]" />
        <span className="w-[109px] border-r border-[#a0a0a0]" />
        <span className="w-[105px] border-r border-[#a0a0a0]" />
        <span className="w-[106px] border-r border-[#a0a0a0]" />
        <span className="w-[104px] border-r border-[#a0a0a0]" />
        <span className="flex w-[176px] items-center gap-2 pl-2">
          <Icon w={22} h={18}>
            <path d="M1 17v-4M5.500 17v-6M10 17V8M14.500 17V5M19 17V1" stroke={GREEN} strokeWidth="2.600" />
          </Icon>
          131 / 0 Mb
        </span>
      </footer>
    </div>
  )
}
